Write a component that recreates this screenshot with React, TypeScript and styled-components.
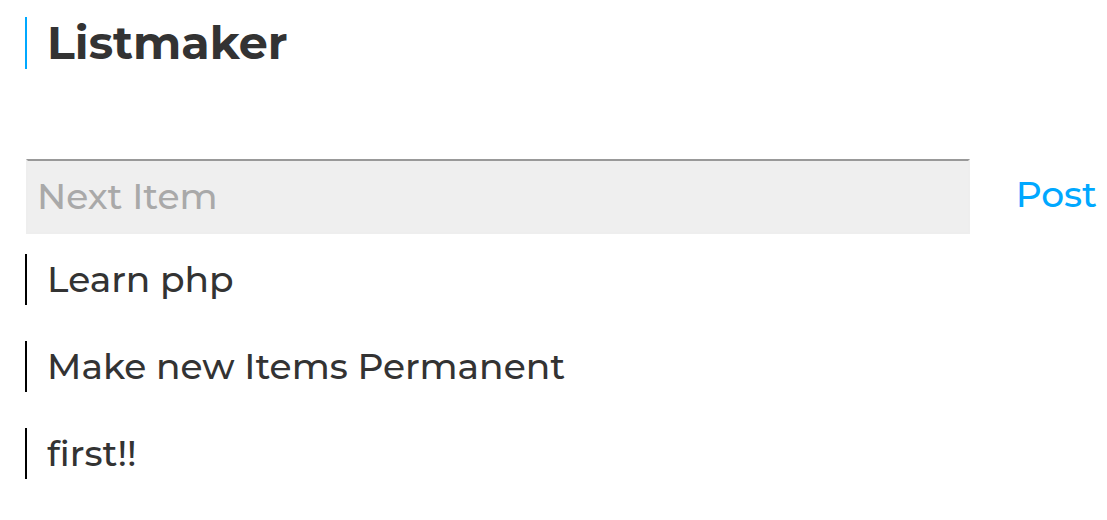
import React, { useState } from "react";
import styled, { createGlobalStyle } from "styled-components";

const GlobalStyle = createGlobalStyle`
  * {
    box-sizing: border-box;
  }

  body {
    margin: 0;
    background: #fff;
    color: #333;
    font-family: Montserrat, Inter, sans-serif;
    font-size: 36px;
    font-weight: 500;
  }
`;

const Page = styled.main`
  padding: 17px 10px 36px 25px;
`;

const Title = styled.h1`
  margin: 0 0 90px;
  padding-left: 20px;
  border-left: 2px solid #00a8ff;
  font-size: 46px;
  font-weight: 700;
  line-height: 52px;
`;

const PostForm = styled.form`
  display: flex;
  align-items: center;
  gap: 46px;
  margin-bottom: 20px;
  padding-left: 1px;
`;

const ItemInput = styled.input`
  flex: 1;
  min-width: 0;
  height: 75px;
  padding: 0 9px 2px;
  border: 2px solid #eee;
  border-top-color: #999;
  background: #efefef;
  color: #333;
  font: inherit;
  outline: none;

  &::placeholder {
    color: #a9a9a9;
    opacity: 1;
  }
`;

const PostButton = styled.button`
  padding: 0 0 6px;
  border: 0;
  background: none;
  color: #00a8ff;
  font: inherit;
  cursor: pointer;
`;

const List = styled.ul`
  display: flex;
  flex-direction: column;
  gap: 36px;
  margin: 0;
  padding: 0;
  list-style: none;
`;

const Item = styled.li`
  padding-left: 20px;
  border-left: 2px solid #000;
  line-height: 51px;
`;

export default function App() {
  const [items, setItems] = useState<string[]>([
    "Learn php",
    "Make new Items Permanent",
    "first!!",
  ]);
  const [draft, setDraft] = useState("");

  const post = (event: React.FormEvent) => {
    event.preventDefault();
    if (!draft.trim()) return;
    setItems([draft.trim(), ...items]);
    setDraft("");
  };

  return (
    <>
      <GlobalStyle />
      <Page>
        <Title>Listmaker</Title>
        <PostForm onSubmit={post}>
          <ItemInput
            type="text"
            aria-label="Next Item"
            placeholder="Next Item"
            value={draft}
            onChange={(event) => setDraft(event.target.value)}
          />
          <PostButton type="submit">Post</PostButton>
        </PostForm>
        <List>
          {items.map((item, index) => (
            <Item key={`${item}-${index}`}>{item}</Item>
          ))}
        </List>
      </Page>
    </>
  );
}
